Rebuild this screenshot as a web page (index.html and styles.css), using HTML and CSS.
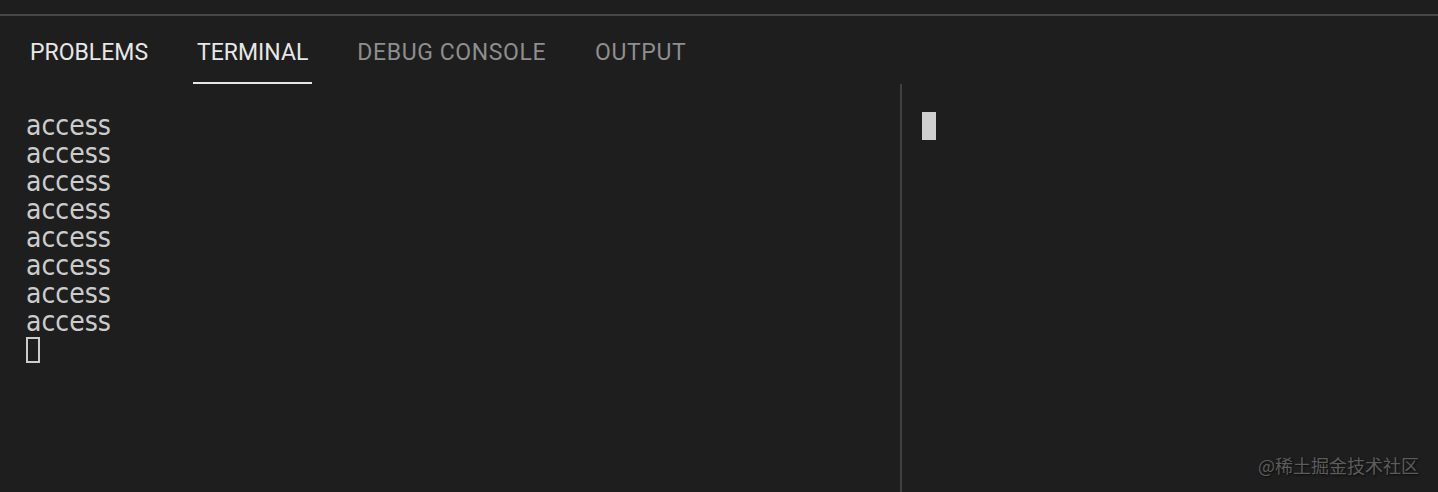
FILE: index.html
```html
<!DOCTYPE html>
<html lang="en">
<head>
    <meta charset="UTF-8">
    <title>Terminal</title>
    <link rel="stylesheet" href="styles.css">
</head>
<body>
    <div class="panel">
        <div class="tabs">
            <div class="tab">PROBLEMS</div>
            <div class="tab active">TERMINAL</div>
            <div class="tab dim">DEBUG CONSOLE</div>
            <div class="tab dim">OUTPUT</div>
        </div>
        <div class="terminals">
            <div class="term left">
<pre class="output">access
access
access
access
access
access
access
access</pre>
                <div class="line"><span class="cursor hollow"></span></div>
            </div>
            <div class="term right">
                <div class="line"><span class="cursor solid"></span></div>
            </div>
        </div>
        <div class="watermark">@稀土掘金技术社区</div>
    </div>
</body>
</html>
```

FILE: styles.css
```css
* { box-sizing: border-box; }
html, body {
    margin: 0;
    padding: 0;
    background: #1e1e1e;
    height: 492px;
    overflow: hidden;
}
.panel {
    margin-top: 14px;
    border-top: 2px solid #474747;
    height: 478px;
    display: flex;
    flex-direction: column;
    position: relative;
}
.tabs {
    display: flex;
    gap: 41px;
    padding-left: 26px;
    height: 68px;
}
.tab {
    font-family: Roboto, "Liberation Sans", sans-serif;
    font-size: 23px;
    line-height: 30px;
    color: #e7e7e7;
    padding: 22px 4px 0;
    height: 68px;
    border-bottom: 2px solid transparent;
}
.tab.active { border-bottom-color: #e7e7e7; }
.tab.dim {
    color: #8e8e8e;
    letter-spacing: 0.6px;
}
.terminals {
    flex: 1;
    display: flex;
}
.term {
    padding-top: 28px;
    font-family: "DejaVu Sans Condensed", "DejaVu Sans", sans-serif;
    font-stretch: condensed;
    font-size: 28px;
    line-height: 28px;
    color: #cccccc;
}
.term.left {
    width: 900px;
    padding-left: 26px;
}
.term.right {
    flex: 1;
    border-left: 2px solid #404040;
    padding-left: 20px;
}
.output {
    margin: 0;
    font: inherit;
    white-space: pre;
}
.line { height: 28px; }
.cursor {
    display: inline-block;
    width: 14px;
    vertical-align: top;
}
.cursor.hollow {
    height: 26px;
    margin-top: 1px;
    border: 2px solid #cccccc;
}
.cursor.solid {
    height: 28px;
    background: #d0d0d0;
}
.watermark {
    position: absolute;
    right: 19px;
    bottom: 15px;
    font-family: "Noto Sans CJK SC", sans-serif;
    font-size: 18px;
    line-height: 24px;
    color: #5c5c5c;
    text-shadow: 1px 1px 2px rgba(0, 0, 0, 0.7);
}
```
